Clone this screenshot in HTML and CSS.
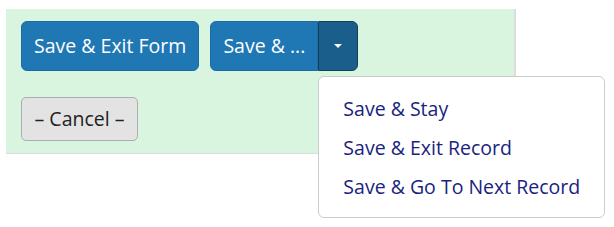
FILE: index.html
```html
<!DOCTYPE html>
<html lang="en">

<head>
    <meta charset="UTF-8">
    <title>Form Buttons</title>
    <link rel="stylesheet" href="styles.css">
</head>

<body>
    <!-- Form action panel -->
    <div class="panel">
        <div class="actions">
            <button class="btn btn-primary">Save &amp; Exit Form</button>
            <div class="btn-group">
                <button class="btn btn-primary btn-split">Save &amp; ...</button>
                <button class="btn btn-primary btn-toggle"><span class="caret"></span></button>
                <ul class="dropdown-menu">
                    <li><a href="#">Save &amp; Stay</a></li>
                    <li><a href="#">Save &amp; Exit Record</a></li>
                    <li><a href="#">Save &amp; Go To Next Record</a></li>
                </ul>
            </div>
        </div>
        <div class="actions">
            <button class="btn btn-default">&ndash; Cancel &ndash;</button>
        </div>
    </div>
</body>

</html>
```

FILE: styles.css
```css
/* Reset */
* {
    margin: 0;
    padding: 0;
    box-sizing: border-box;
}

html,
body {
    min-height: 227px;
}

body {
    font-family: "Open Sans", "Liberation Sans", sans-serif;
    background: #fff;
    padding: 9px 0 0 6px;
}

/* Green panel holding the buttons */
.panel {
    width: 510px;
    height: 145px;
    background-color: #d9f5e0;
    border-right: 2px solid #ddd;
    border-bottom: 1px solid #ddd;
    padding: 12px 15px;
}

.actions {
    display: flex;
    gap: 11px;
}

.actions + .actions {
    margin-top: 26px;
}

/* Buttons */
.btn {
    font-family: inherit;
    font-size: 19.5px;
    line-height: 24px;
    border-radius: 6px;
    cursor: pointer;
}

.btn-primary {
    height: 50px;
    padding: 0 12px;
    color: #fff;
    background-color: #1f77b4;
    border: 1px solid #1b6ca5;
}

.btn-default {
    height: 44px;
    width: 117px;
    padding: 0;
    color: #222;
    background-color: #e3e3e3;
    border: 1px solid #adadad;
    border-radius: 5px;
}

/* Split button group */
.btn-group {
    display: flex;
    position: relative;
}

.btn-split {
    width: 108px;
    padding: 0;
    border-top-right-radius: 0;
    border-bottom-right-radius: 0;
}

.btn-toggle {
    width: 40px;
    padding: 0;
    background-color: #1a5e8c;
    border: 1px solid #123f5e;
    border-top-left-radius: 0;
    border-bottom-left-radius: 0;
    display: flex;
    align-items: center;
    justify-content: center;
}

.caret {
    width: 0;
    height: 0;
    border-left: 4px solid transparent;
    border-right: 4px solid transparent;
    border-top: 4px solid #fff;
}

/* Dropdown menu */
.dropdown-menu {
    list-style: none;
    position: absolute;
    top: 55px;
    left: 108px;
    width: 287px;
    height: 142px;
    background: #fff;
    border: 1px solid #ccc;
    border-radius: 6px;
    padding: 12px 0;
    z-index: 5;
}

.dropdown-menu a {
    display: block;
    padding: 7px 24px;
    line-height: 25px;
    font-size: 19.5px;
    color: #1a237e;
    text-decoration: none;
    white-space: nowrap;
}
```
